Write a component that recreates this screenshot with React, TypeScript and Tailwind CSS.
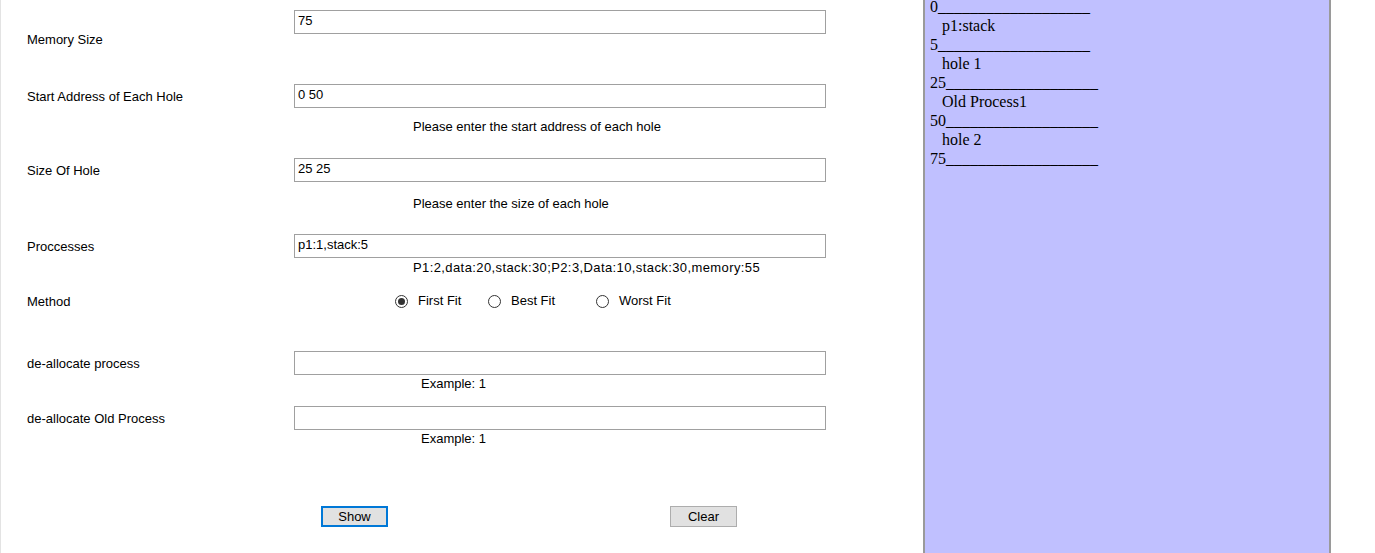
import { useState } from "react";

const UNDER = "___________________";

function Field({ value }: { value: string }) {
  return (
    <div className="h-[24px] w-[532px] border border-[#a0a0a0] bg-white pl-[3px] pt-[2px] leading-[16px]">
      {value}
    </div>
  );
}

function Radio({ label, checked, width }: { label: string; checked: boolean; width: string }) {
  return (
    <div className={`flex items-center gap-[10px] ${width}`}>
      <span className="flex h-[13px] w-[13px] shrink-0 items-center justify-center rounded-full border border-[#333333] bg-white">
        {checked && <span className="h-[7px] w-[7px] rounded-full bg-[#333333]" />}
      </span>
      <span>{label}</span>
    </div>
  );
}

export default function App() {
  const [method] = useState("first");
  const lines = [
    "0" + UNDER,
    "   p1:stack",
    "5" + UNDER,
    "   hole 1",
    "25" + UNDER,
    "   Old Process1",
    "50" + UNDER,
    "   hole 2",
    "75" + UNDER,
  ];

  return (
    <div
      className="flex h-[553px] w-[1375px] overflow-hidden border-l border-[#e3e3e3] bg-white text-[13px] leading-[16px] text-black"
      style={{ fontFamily: '"Liberation Sans", Arial, sans-serif' }}
    >
      {/* formulaire */}
      <div className="flex w-[922px] shrink-0 flex-col pl-[26px] pt-[10px]">
        <div className="flex items-start">
          <div className="mt-[22px] w-[267px]">Memory Size</div>
          <Field value="75" />
        </div>

        <div className="mt-[36px] flex items-start">
          <div className="flex h-[24px] w-[267px] items-center pt-[2px]">Start Address of Each Hole</div>
          <div className="flex flex-col">
            <Field value="0 50" />
            <div className="mt-[11px] pl-[119px]">Please enter the start address of each hole</div>
          </div>
        </div>

        <div className="mt-[23px] flex items-start">
          <div className="flex h-[24px] w-[267px] items-center pt-[2px]">Size Of Hole</div>
          <div className="flex flex-col">
            <Field value="25 25" />
            <div className="mt-[14px] pl-[119px]">Please enter the size of each hole</div>
          </div>
        </div>

        <div className="mt-[22px] flex items-start">
          <div className="flex h-[24px] w-[267px] items-center pt-[2px]">Proccesses</div>
          <div className="flex flex-col">
            <Field value="p1:1,stack:5" />
            <div className="mt-[2px] pl-[119px] tracking-[0.4px]">
              P1:2,data:20,stack:30;P2:3,Data:10,stack:30,memory:55
            </div>
          </div>
        </div>

        <div className="mt-[17px] flex h-[16px] items-center">
          <div className="w-[267px] translate-y-[1px]">Method</div>
          <div className="flex items-center pl-[101px]">
            <Radio label="First Fit" checked={method === "first"} width="w-[93px]" />
            <Radio label="Best Fit" checked={method === "best"} width="w-[108px]" />
            <Radio label="Worst Fit" checked={method === "worst"} width="w-[90px]" />
          </div>
        </div>

        <div className="mt-[42px] flex items-start">
          <div className="flex h-[24px] w-[267px] items-center pt-[2px]">de-allocate process</div>
          <div className="flex flex-col">
            <Field value="" />
            <div className="mt-[1px] pl-[127px]">Example: 1</div>
          </div>
        </div>

        <div className="mt-[14px] flex items-start">
          <div className="flex h-[24px] w-[267px] items-center pt-[2px]">de-allocate Old Process</div>
          <div className="flex flex-col">
            <Field value="" />
            <div className="mt-[1px] pl-[127px]">Example: 1</div>
          </div>
        </div>

        <div className="mt-[59px] flex items-center pl-[294px]">
          <button className="h-[21px] w-[67px] border-2 border-[#0078d7] bg-[#e1e1e1] pt-[1px] leading-[16px]">
            Show
          </button>
          <button className="ml-[282px] h-[21px] w-[67px] border border-[#adadad] bg-[#e1e1e1] pt-[1px] leading-[16px]">
            Clear
          </button>
        </div>
      </div>

      {/* résultat */}
      <div className="h-full w-[408px] shrink-0 border-x-2 border-[#9a9a9a] bg-[#c0c0ff]">
        <div
          className="-mt-[3px] whitespace-pre pl-[5px] text-[16px] leading-[19px] text-black"
          style={{ fontFamily: '"Liberation Serif", "Times New Roman", serif' }}
        >
          {lines.map((l, i) => (
            <div key={i}>{l}</div>
          ))}
        </div>
      </div>
    </div>
  );
}
